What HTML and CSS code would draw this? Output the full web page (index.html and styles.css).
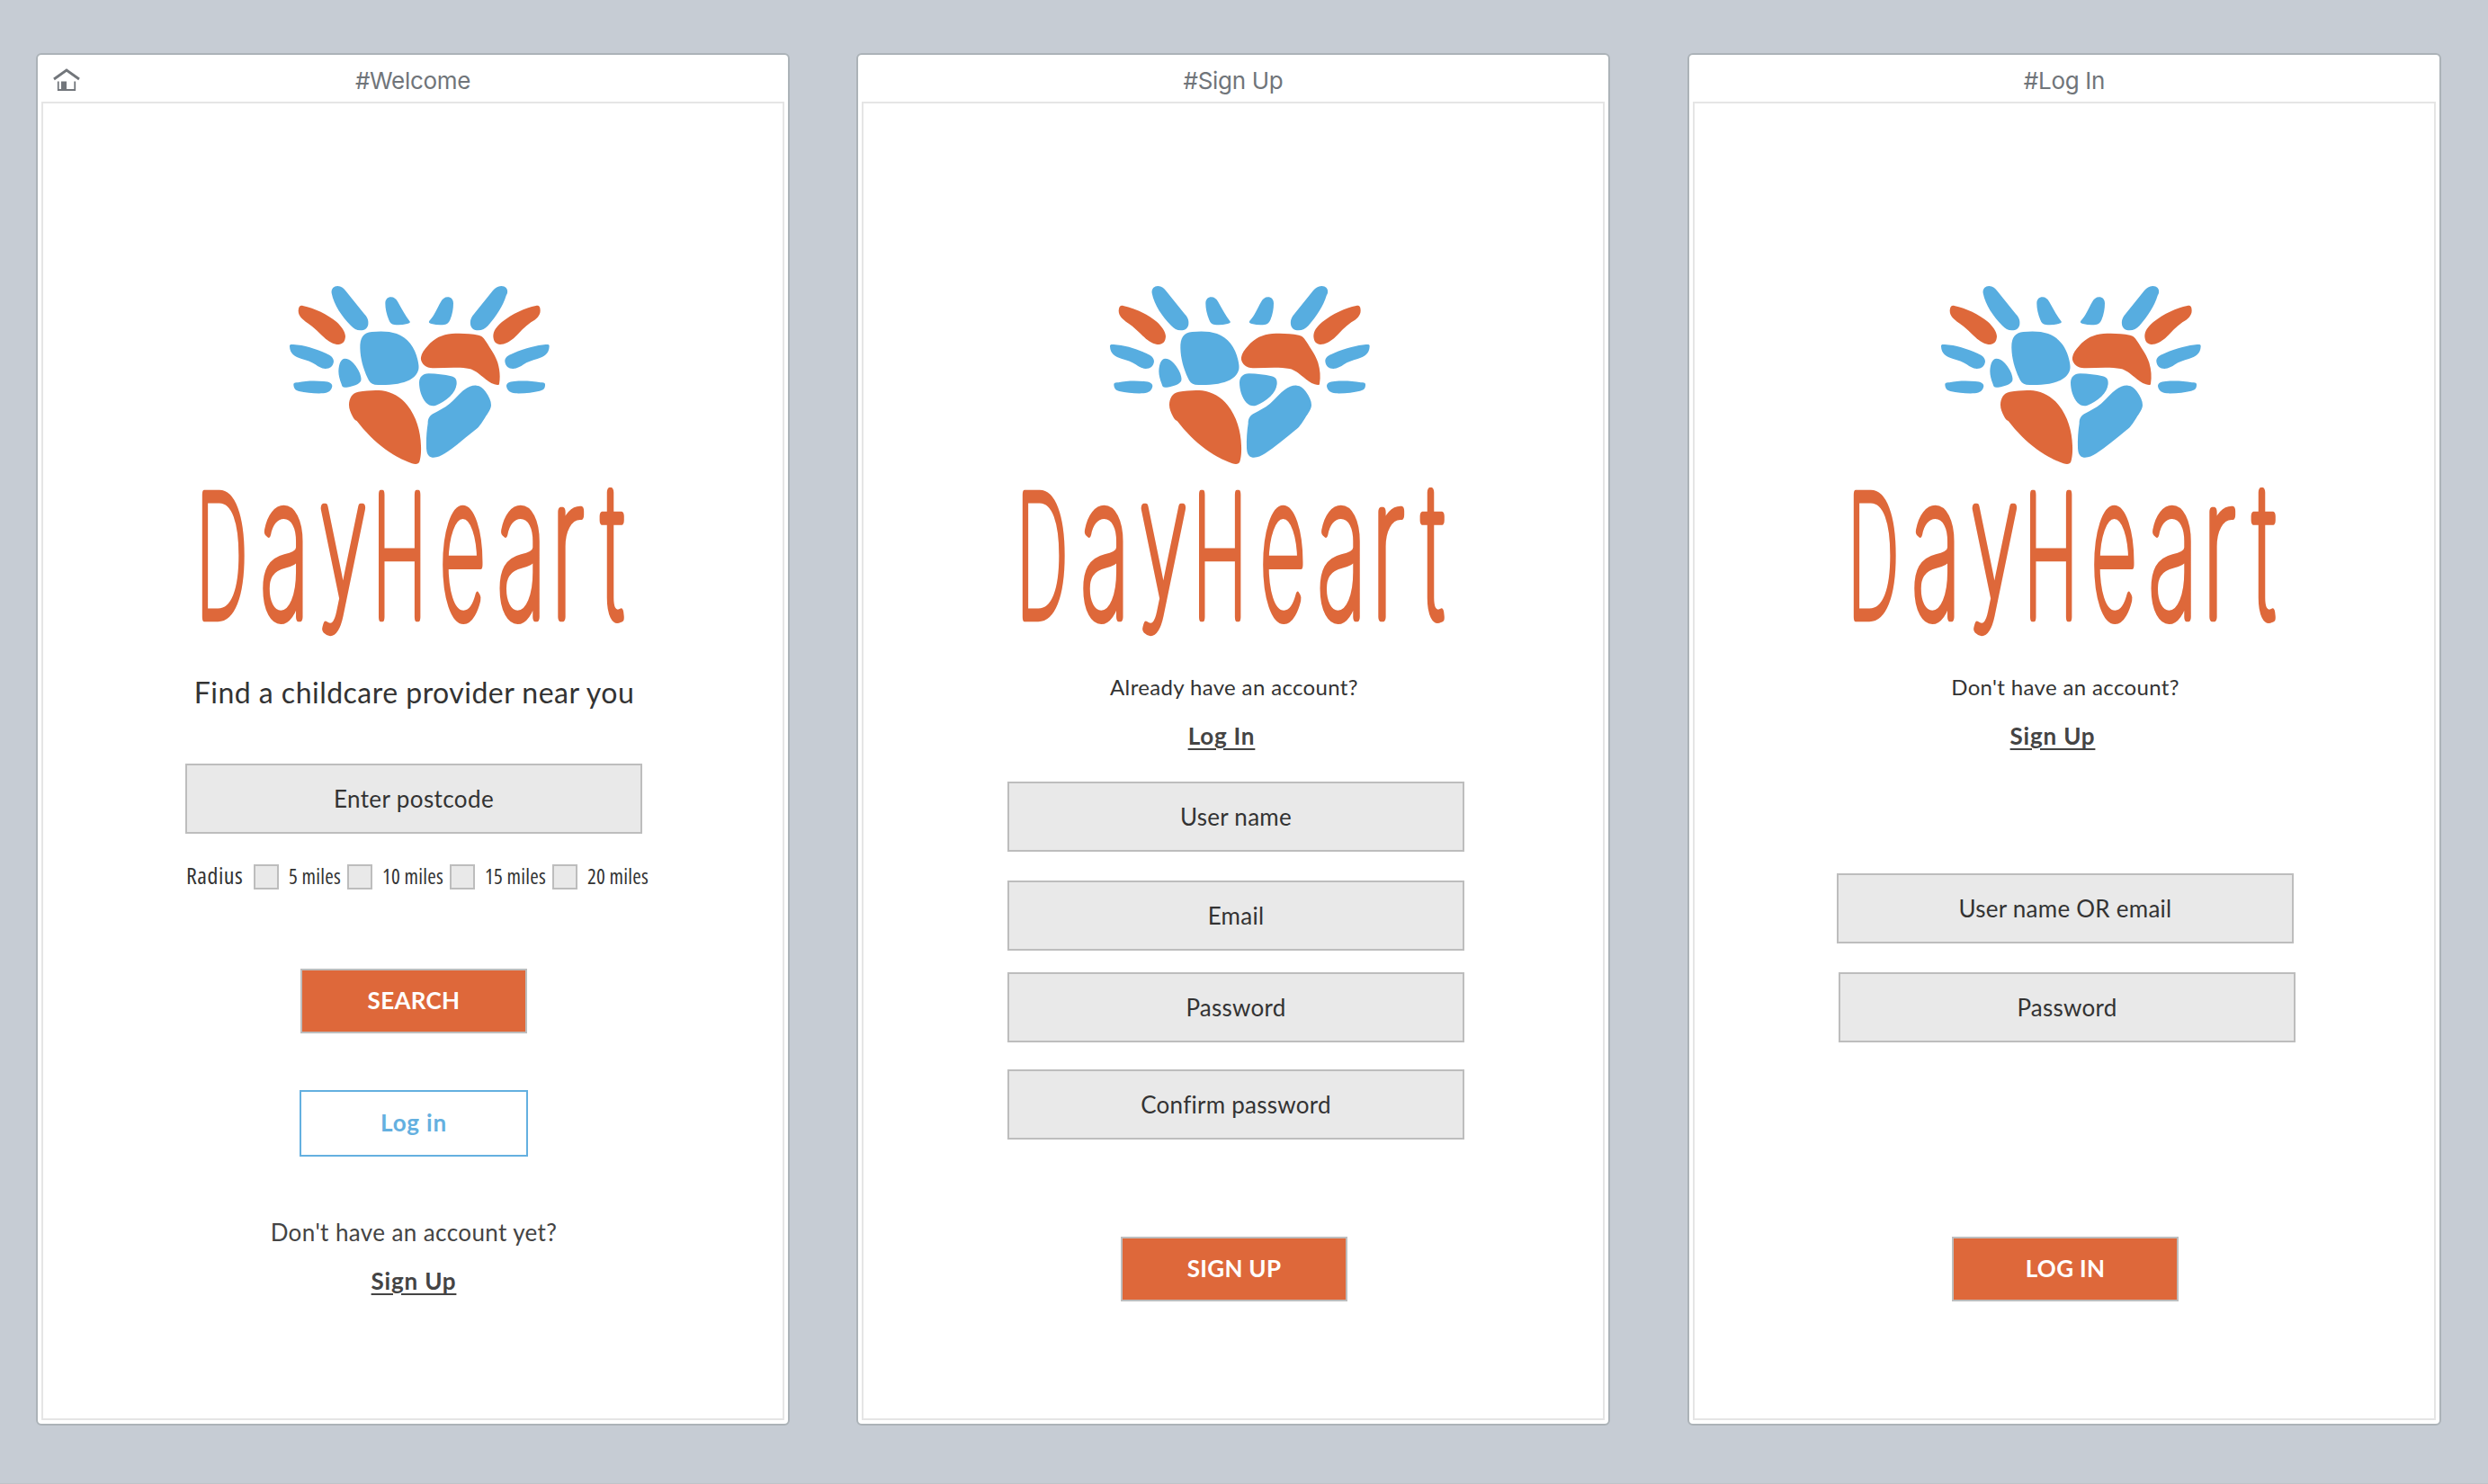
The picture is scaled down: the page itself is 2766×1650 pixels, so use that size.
FILE: index.html
```html
<!DOCTYPE html>
<html lang="en">
<head>
<meta charset="utf-8">
<title>DayHeart screens</title>
<link rel="stylesheet" href="styles.css">
</head>
<body>
<svg class="defs" width="0" height="0" aria-hidden="true">
  <symbol id="mark" viewBox="0 0 1000 700">
    <g class="blue">
      <path d="M206 78C204 62 214 54 226 54C238 55 245 60 252 69L313 145C324 157 330 166 328 182C326 195 316 202 302 202C289 202 280 196 270 186C240 155 214 118 206 78Z"/>
      <path d="M385 112C385 99 393 91 404 91C414 91 421 97 427 107C440 130 452 153 466 171C470 176 465 178 458 180C443 184 428 185 415 183C406 182 401 177 397 167C389 148 385 130 385 112Z"/>
      <path d="M612 112C612 99 604 91 593 91C583 91 576 97 570 107C557 130 548 153 532 170C528 175 532 178 539 180C554 184 569 185 582 183C591 182 596 177 601 167C609 148 612 130 612 112Z"/>
      <path d="M792 78C795 62 785 54 772 54C760 55 752 60 744 69L683 145C673 157 667 166 669 182C671 195 681 202 695 202C708 202 718 196 728 186C755 155 779 118 788 86Z"/>
      <path d="M66 256C65 249 70 248 78 249C115 251 152 263 188 279C204 286 213 294 213 306C211 322 201 330 185 330C171 329 162 323 152 316C138 306 123 302 106 297C83 290 67 280 66 256Z"/>
      <path d="M932 256C933 249 928 248 920 249C890 252 855 260 812 278C794 285 783 292 784 306C786 322 796 330 811 330C825 329 836 323 846 316C858 307 875 302 892 297C915 290 931 280 932 256Z"/>
      <path d="M79 381C80 376 88 376 94 376C118 370 150 369 180 372C199 373 208 379 208 388C206 402 196 411 178 412C150 413 122 411 97 405C86 402 79 397 79 381Z"/>
      <path d="M918 381C917 376 910 376 903 376C875 371 845 369 815 372C798 373 789 378 789 388C791 402 801 411 819 412C850 413 878 409 900 404C912 401 919 397 918 381Z"/>
      <path d="M229 338C230 312 238 297 250 296C268 296 285 314 296 336C303 350 306 362 304 370C300 381 280 389 256 392C245 394 241 391 239 382C233 365 229 352 229 338Z"/>
      <path d="M301 262C300 226 312 210 340 207C372 204 400 205 423 213C460 227 484 258 493 300C498 321 498 331 492 343C481 364 456 375 427 380C400 384 372 385 350 383C338 381 331 373 326 361C311 328 302 296 301 262Z"/>
      <path d="M498 376C499 358 508 347 530 346C556 346 583 350 605 355C620 359 624 367 623 381C621 397 614 410 601 422C586 436 569 446 554 452C542 456 531 453 521 443C506 427 498 400 498 376Z"/>
      <path d="M527 512C527 498 531 489 543 481C562 469 582 462 600 446C620 428 634 411 649 400C662 390 676 385 689 386C702 387 711 394 719 406C731 423 738 437 738 451C738 464 728 478 717 494C705 513 698 524 684 535C650 562 616 592 583 613C569 622 557 627 542 626C529 624 523 614 522 594C521 565 523 537 527 512Z"/>
    </g>
    <g class="orange">
      <path d="M95 136C96 123 101 118 110 120C150 128 192 149 222 173C240 190 251 205 252 222C251 240 242 248 229 249C213 249 200 241 186 230C165 212 147 191 126 178C108 165 95 155 95 136Z"/>
      <path d="M902 136C902 122 897 118 887 120C851 127 810 146 774 174C755 190 745 205 745 222C746 240 755 248 768 249C784 249 799 240 813 229C833 210 850 189 871 175C889 165 902 154 902 136Z"/>
      <path d="M504 292C506 277 515 266 526 254C549 227 575 216 607 213C640 211 668 213 696 218C709 221 715 229 722 241C736 264 752 285 760 310C767 335 769 355 765 381C764 386 757 384 749 382C735 379 723 368 711 358C695 345 683 334 665 330C632 324 590 327 549 328C530 328 519 323 511 314C505 307 503 300 504 292Z"/>
      <path d="M264 451C264 429 274 411 295 407C322 403 350 400 374 403C408 408 436 424 459 452C488 489 503 537 504 587C505 608 503 627 499 640C496 649 486 650 474 646C445 636 413 618 386 599C350 573 317 539 290 504C284 502 280 497 276 489C269 476 264 464 264 451Z"/>
    </g>
  </symbol>
</svg>

<main class="canvas">
  <section class="screen">
    <header class="bar">
      <svg class="home" width="30" height="26" viewBox="0 0 30 26"><path class="roof" d="M1 12L15 2L29 12"/><path class="walls" d="M5.75 14.5V24H24.25V14.5"/><path class="door" d="M9 14.500h6v9h-6z"/></svg>
      <h2 class="title">#Welcome</h2>
    </header>
    <div class="page">
      <div class="logo">
        <svg class="mark" viewBox="0 0 1000 700"><use href="#mark"/></svg>
        <svg class="word" viewBox="209 530 500 185"><text transform="scale(.4 1)"><tspan class="cap" x="545" y="686.500" textLength="143" lengthAdjust="spacingAndGlyphs">D</tspan><tspan class="low" x="723" y="686" textLength="137" lengthAdjust="spacingAndGlyphs">a</tspan><tspan class="tail" x="887" y="664" textLength="133" lengthAdjust="spacingAndGlyphs">y</tspan><tspan class="cap" x="1035" y="686.500" textLength="151" lengthAdjust="spacingAndGlyphs">H</tspan><tspan class="low" x="1222" y="686" textLength="127" lengthAdjust="spacingAndGlyphs">e</tspan><tspan class="low" x="1381" y="686" textLength="137" lengthAdjust="spacingAndGlyphs">a</tspan><tspan class="low" x="1530" y="686" textLength="94" lengthAdjust="spacingAndGlyphs">r</tspan><tspan class="tee" x="1672" y="686.500" textLength="61" lengthAdjust="spacingAndGlyphs">t</tspan></text></svg>
      </div>
      <p class="lead">Find a childcare provider near you</p>
      <div class="field f-post">Enter postcode</div>
      <div class="radius"><span class="rlabel">Radius</span><label class="opt"><i class="box"></i>5 miles</label><label class="opt"><i class="box"></i>10 miles</label><label class="opt"><i class="box"></i>15 miles</label><label class="opt"><i class="box"></i>20 miles</label></div>
      <div class="btn b-search">SEARCH</div>
      <div class="btn ghost">Log in</div>
      <p class="ask big">Don't have an account yet?</p>
      <a class="link l-welcome">Sign Up</a>
    </div>
  </section>

  <section class="screen second">
    <header class="bar"><h2 class="title">#Sign Up</h2></header>
    <div class="page">
      <div class="logo">
        <svg class="mark" viewBox="0 0 1000 700"><use href="#mark"/></svg>
        <svg class="word" viewBox="209 530 500 185"><text transform="scale(.4 1)"><tspan class="cap" x="545" y="686.500" textLength="143" lengthAdjust="spacingAndGlyphs">D</tspan><tspan class="low" x="723" y="686" textLength="137" lengthAdjust="spacingAndGlyphs">a</tspan><tspan class="tail" x="887" y="664" textLength="133" lengthAdjust="spacingAndGlyphs">y</tspan><tspan class="cap" x="1035" y="686.500" textLength="151" lengthAdjust="spacingAndGlyphs">H</tspan><tspan class="low" x="1222" y="686" textLength="127" lengthAdjust="spacingAndGlyphs">e</tspan><tspan class="low" x="1381" y="686" textLength="137" lengthAdjust="spacingAndGlyphs">a</tspan><tspan class="low" x="1530" y="686" textLength="94" lengthAdjust="spacingAndGlyphs">r</tspan><tspan class="tee" x="1672" y="686.500" textLength="61" lengthAdjust="spacingAndGlyphs">t</tspan></text></svg>
      </div>
      <p class="ask">Already have an account?</p>
      <a class="link">Log In</a>
      <div class="field f-user">User name</div>
      <div class="field f-email">Email</div>
      <div class="field f-pass">Password</div>
      <div class="field f-confirm">Confirm password</div>
      <div class="btn b-signup">SIGN UP</div>
    </div>
  </section>

  <section class="screen third">
    <header class="bar"><h2 class="title">#Log In</h2></header>
    <div class="page">
      <div class="logo">
        <svg class="mark" viewBox="0 0 1000 700"><use href="#mark"/></svg>
        <svg class="word" viewBox="209 530 500 185"><text transform="scale(.4 1)"><tspan class="cap" x="545" y="686.500" textLength="143" lengthAdjust="spacingAndGlyphs">D</tspan><tspan class="low" x="723" y="686" textLength="137" lengthAdjust="spacingAndGlyphs">a</tspan><tspan class="tail" x="887" y="664" textLength="133" lengthAdjust="spacingAndGlyphs">y</tspan><tspan class="cap" x="1035" y="686.500" textLength="151" lengthAdjust="spacingAndGlyphs">H</tspan><tspan class="low" x="1222" y="686" textLength="127" lengthAdjust="spacingAndGlyphs">e</tspan><tspan class="low" x="1381" y="686" textLength="137" lengthAdjust="spacingAndGlyphs">a</tspan><tspan class="low" x="1530" y="686" textLength="94" lengthAdjust="spacingAndGlyphs">r</tspan><tspan class="tee" x="1672" y="686.500" textLength="61" lengthAdjust="spacingAndGlyphs">t</tspan></text></svg>
      </div>
      <p class="ask">Don't have an account?</p>
      <a class="link">Sign Up</a>
      <div class="field f-login">User name OR email</div>
      <div class="field f-loginpass">Password</div>
      <div class="btn b-login">LOG IN</div>
    </div>
  </section>
</main>
</body>
</html>
```
FILE: styles.css
```css
* { box-sizing: border-box; }
body { margin: 0; background: #c6ccd4; font-family: Lato, "Liberation Sans", sans-serif; color: #333; }
h2, p { margin: 0; font-weight: 400; }
.defs { display: block; }
.canvas { display: flex; align-items: flex-start; height: 1650px; padding: 59px 0 0 40px; border-bottom: 1px solid #bfc3c8; }
.screen { flex: none; width: 838px; height: 1526px; padding: 0 4px 4px; background: #fff; border: 2px solid #acb3b8; border-radius: 6px; }
.second { margin-left: 74px; }
.third { margin-left: 86px; }
.bar { height: 52px; display: grid; grid-template-columns: 1fr auto 1fr; align-items: center; }
.home { margin: 4px 0 0 13px; fill: none; stroke: #72767b; }
.roof { stroke-width: 2.8; }
.walls { stroke-width: 1.8; }
.door { fill: #72767b; stroke: none; }
.title { grid-column: 2; font: 400 26px/32px Inter, sans-serif; letter-spacing: -.3px; color: #70757a; padding-top: 5px; }
.page { height: 1466px; border: 2px solid #e5e5e5; display: flex; flex-direction: column; align-items: center; }

/* Logo: heart mark above the condensed wordmark */
.logo { flex: none; width: 500px; height: 415px; margin-top: 185px; display: flex; flex-direction: column; }
.mark { flex: none; width: 333.333px; height: 233.333px; margin: 0 0 -3.333px 91px; }
.blue { fill: #57ade0; }
.orange { fill: #de683a; }
.word { flex: none; width: 500px; height: 185px; overflow: visible; }
.word text { font-family: Inter, sans-serif; font-weight: 100; fill: #de683a; }
.word tspan { stroke: #de683a; stroke-width: 8px; stroke-linejoin: round; vector-effect: non-scaling-stroke; }
.cap { font-size: 187px; }
.low { font-size: 214px; }
.tee { font-size: 205px; }
.tail { font-size: 181px; }

.lead { margin: 35px 0 0 3px; font-size: 32px; line-height: 40px; letter-spacing: .48px; }
.field { flex: none; width: 508px; height: 78px; display: flex; align-items: center; justify-content: center; background: #e9e9e9; border: 2px solid #bdbdbd; font-size: 26px; letter-spacing: .25px; }
.f-post { margin: 59px 0 0 2px; letter-spacing: .4px; }
.f-user { margin: 35px 0 0 6px; }
.f-email { margin: 32px 0 0 6px; }
.f-pass { margin: 24px 0 0 6px; }
.f-confirm { margin: 30px 0 0 6px; }
.f-login { margin: 137px 0 0 2px; }
.f-loginpass { margin: 32px 0 0 6px; }
.radius { align-self: flex-start; height: 28px; margin: 34px 0 0 159px; display: grid; grid-template-columns: 75px 104px 114px 114px auto; grid-auto-rows: 28px; align-items: start; font-family: "Open Sans", sans-serif; font-stretch: 75%; white-space: nowrap; }
.rlabel { font-size: 26px; line-height: 24px; letter-spacing: .5px; }
.opt { display: flex; gap: 11px; font-size: 23px; line-height: 26px; letter-spacing: .25px; }
.box { flex: none; width: 28px; height: 28px; background: #e9e9e9; border: 2px solid #bdbdbd; }
.btn { flex: none; width: 252px; height: 72px; padding-bottom: 2px; display: flex; align-items: center; justify-content: center; background: #de683a; border: 2px solid #bdbdbd; color: #fff; font-weight: 700; font-size: 26px; letter-spacing: .3px; }
.b-search { margin: 88px 0 0 2px; }
.ghost { width: 254px; height: 74px; margin: 63px 0 0 2px; background: #fff; border-color: #64b0e0; color: #64b0e0; letter-spacing: .8px; }
.b-signup { margin: 108px 0 0 2px; }
.b-login { margin: 216px 0 0 2px; }
.ask { margin: 33px 0 0 2px; font-size: 24px; line-height: 32px; letter-spacing: .35px; }
.big { margin-top: 68px; font-size: 26px; letter-spacing: .4px; color: #444; }
.link { margin: 22px 26px 0 0; font-weight: 700; font-size: 26px; line-height: 32px; letter-spacing: .8px; color: #444; text-decoration: underline; text-decoration-thickness: 2px; text-underline-offset: 4px; }
.l-welcome { margin: 22px 0 0 2px; }
```
